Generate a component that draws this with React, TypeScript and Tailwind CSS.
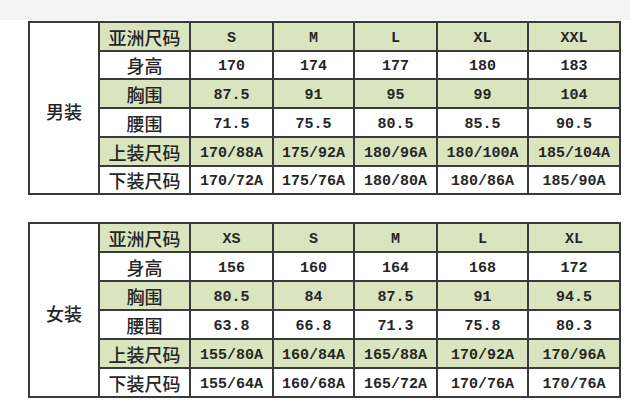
import React from "react";

type Table = {
  cat: string;
  sizes: string[];
  rows: { label: string; vals: string[] }[];
  heights: number[];
};

const tables: Table[] = [
  {
    cat: "男装",
    sizes: ["S", "M", "L", "XL", "XXL"],
    rows: [
      { label: "身高", vals: ["170", "174", "177", "180", "183"] },
      { label: "胸围", vals: ["87.5", "91", "95", "99", "104"] },
      { label: "腰围", vals: ["71.5", "75.5", "80.5", "85.5", "90.5"] },
      { label: "上装尺码", vals: ["170/88A", "175/92A", "180/96A", "180/100A", "185/104A"] },
      { label: "下装尺码", vals: ["170/72A", "175/76A", "180/80A", "180/86A", "185/90A"] },
    ],
    heights: [29, 28, 29, 29, 29, 28],
  },
  {
    cat: "女装",
    sizes: ["XS", "S", "M", "L", "XL"],
    rows: [
      { label: "身高", vals: ["156", "160", "164", "168", "172"] },
      { label: "胸围", vals: ["80.5", "84", "87.5", "91", "94.5"] },
      { label: "腰围", vals: ["63.8", "66.8", "71.3", "75.8", "80.3"] },
      { label: "上装尺码", vals: ["155/80A", "160/84A", "165/88A", "170/92A", "170/96A"] },
      { label: "下装尺码", vals: ["155/64A", "160/68A", "165/72A", "170/76A", "170/76A"] },
    ],
    heights: [29, 29, 29, 29, 29, 29],
  },
];

const cjk = "font-['Noto_Sans_CJK_SC','Noto_Sans',sans-serif]";
const mono = "font-['Liberation_Mono',monospace]";

function SizeTable({ t }: { t: Table }) {
  const green = "bg-[#dae5c0]";
  const rowBg = (i: number) => (i % 2 === 0 ? green : "bg-white");
  const cell = "border-2 border-[#3a3a3a] text-center p-0 leading-none";
  return (
    <table className="table-fixed border-collapse border-2 border-[#3a3a3a] w-[591px] text-[#262626]">
      <colgroup>
        <col className="w-[70px]" />
        <col className="w-[91px]" />
        <col className="w-[83px]" />
        <col className="w-[81px]" />
        <col className="w-[83px]" />
        <col className="w-[91px]" />
        <col className="w-[92px]" />
      </colgroup>
      <tbody>
        <tr style={{ height: t.heights[0] }}>
          <td rowSpan={6} className={`${cell} bg-white ${cjk} text-[18px] font-medium pt-[6px]`}>
            {t.cat}
          </td>
          <td className={`${cell} ${green} ${cjk} text-[18px] font-medium`}>亚洲尺码</td>
          {t.sizes.map((s, j) => (
            <td key={j} className={`${cell} ${green} ${mono} text-[15px] font-bold pt-[3px]`}>
              {s}
            </td>
          ))}
        </tr>
        {t.rows.map((r, i) => (
          <tr key={i} style={{ height: t.heights[i + 1] }}>
            <td className={`${cell} ${rowBg(i + 1)} ${cjk} text-[18px] font-medium`}>{r.label}</td>
            {r.vals.map((v, j) => (
              <td key={j} className={`${cell} ${rowBg(i + 1)} ${mono} text-[15px] font-bold pt-[3px]`}>
                {v}
              </td>
            ))}
          </tr>
        ))}
      </tbody>
    </table>
  );
}

export default function App() {
  return (
    <div className="w-[630px] h-[401px] bg-white overflow-hidden">
      <div className="h-[20px] bg-[#f3f3f3]" />
      <div className="pl-[28px] pt-[1px] flex flex-col gap-[27px]">
        <SizeTable t={tables[0]} />
        <SizeTable t={tables[1]} />
      </div>
    </div>
  );
}
